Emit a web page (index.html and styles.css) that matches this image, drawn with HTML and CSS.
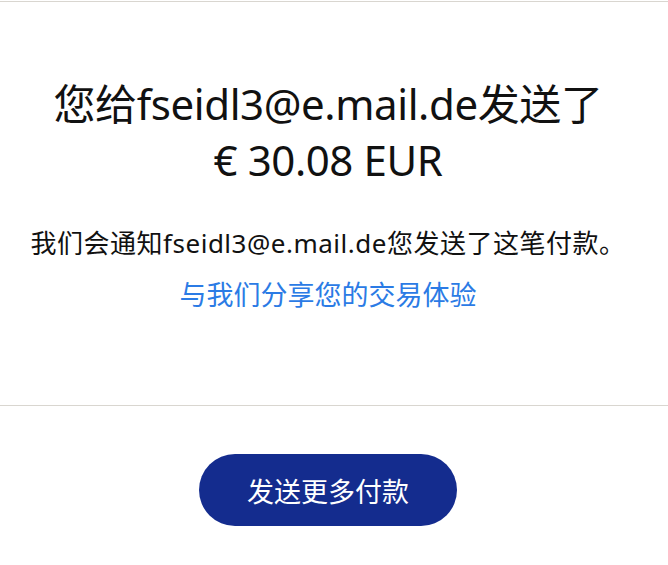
FILE: index.html
```html
<!DOCTYPE html>
<html lang="zh">
<head>
<meta charset="utf-8">
<link rel="stylesheet" href="styles.css">
</head>
<body>
<div class="page">
  <section class="result">
    <h1 class="title">您给fseidl3@e.mail.de发送了<br>€ 30.08 EUR</h1>
    <p class="note">我们会通知fseidl3@e.mail.de您发送了这笔付款。</p>
    <a class="share" href="#">与我们分享您的交易体验</a>
  </section>
  <section class="actions">
    <button class="primary">发送更多付款</button>
  </section>
</div>
</body>
</html>
```
FILE: styles.css
```css
html, body {
  margin: 0;
  padding: 0;
  background: #ffffff;
}
body {
  font-family: "Noto Sans", "Noto Sans CJK SC", sans-serif;
  color: #111111;
}
.page {
  width: 668px;
  padding-top: 1px;
}
.result {
  border-top: 1px solid #d9d6d0;
  border-bottom: 1px solid #d9d6d0;
  height: 405px;
  box-sizing: border-box;
  display: flex;
  flex-direction: column;
  align-items: center;
  padding: 74px 12px 0 0;
}
.title {
  margin: 0;
  font-size: 42px;
  font-weight: 400;
  line-height: 56px;
  letter-spacing: -0.4px;
  text-align: center;
  white-space: nowrap;
}
.note {
  margin: 38px 0 0;
  font-size: 26px;
  line-height: 34px;
  letter-spacing: 0.5px;
  white-space: nowrap;
}
.share {
  margin-top: 18px;
  font-size: 27px;
  line-height: 34px;
  color: #2b7be5;
  text-decoration: none;
}
.actions {
  display: flex;
  justify-content: center;
  padding: 48px 12px 0 0;
}
.primary {
  width: 258px;
  height: 72px;
  border: none;
  border-radius: 36px;
  background: #142c8e;
  color: #ffffff;
  font-family: "Noto Sans", "Noto Sans CJK SC", sans-serif;
  font-size: 27px;
}
```
